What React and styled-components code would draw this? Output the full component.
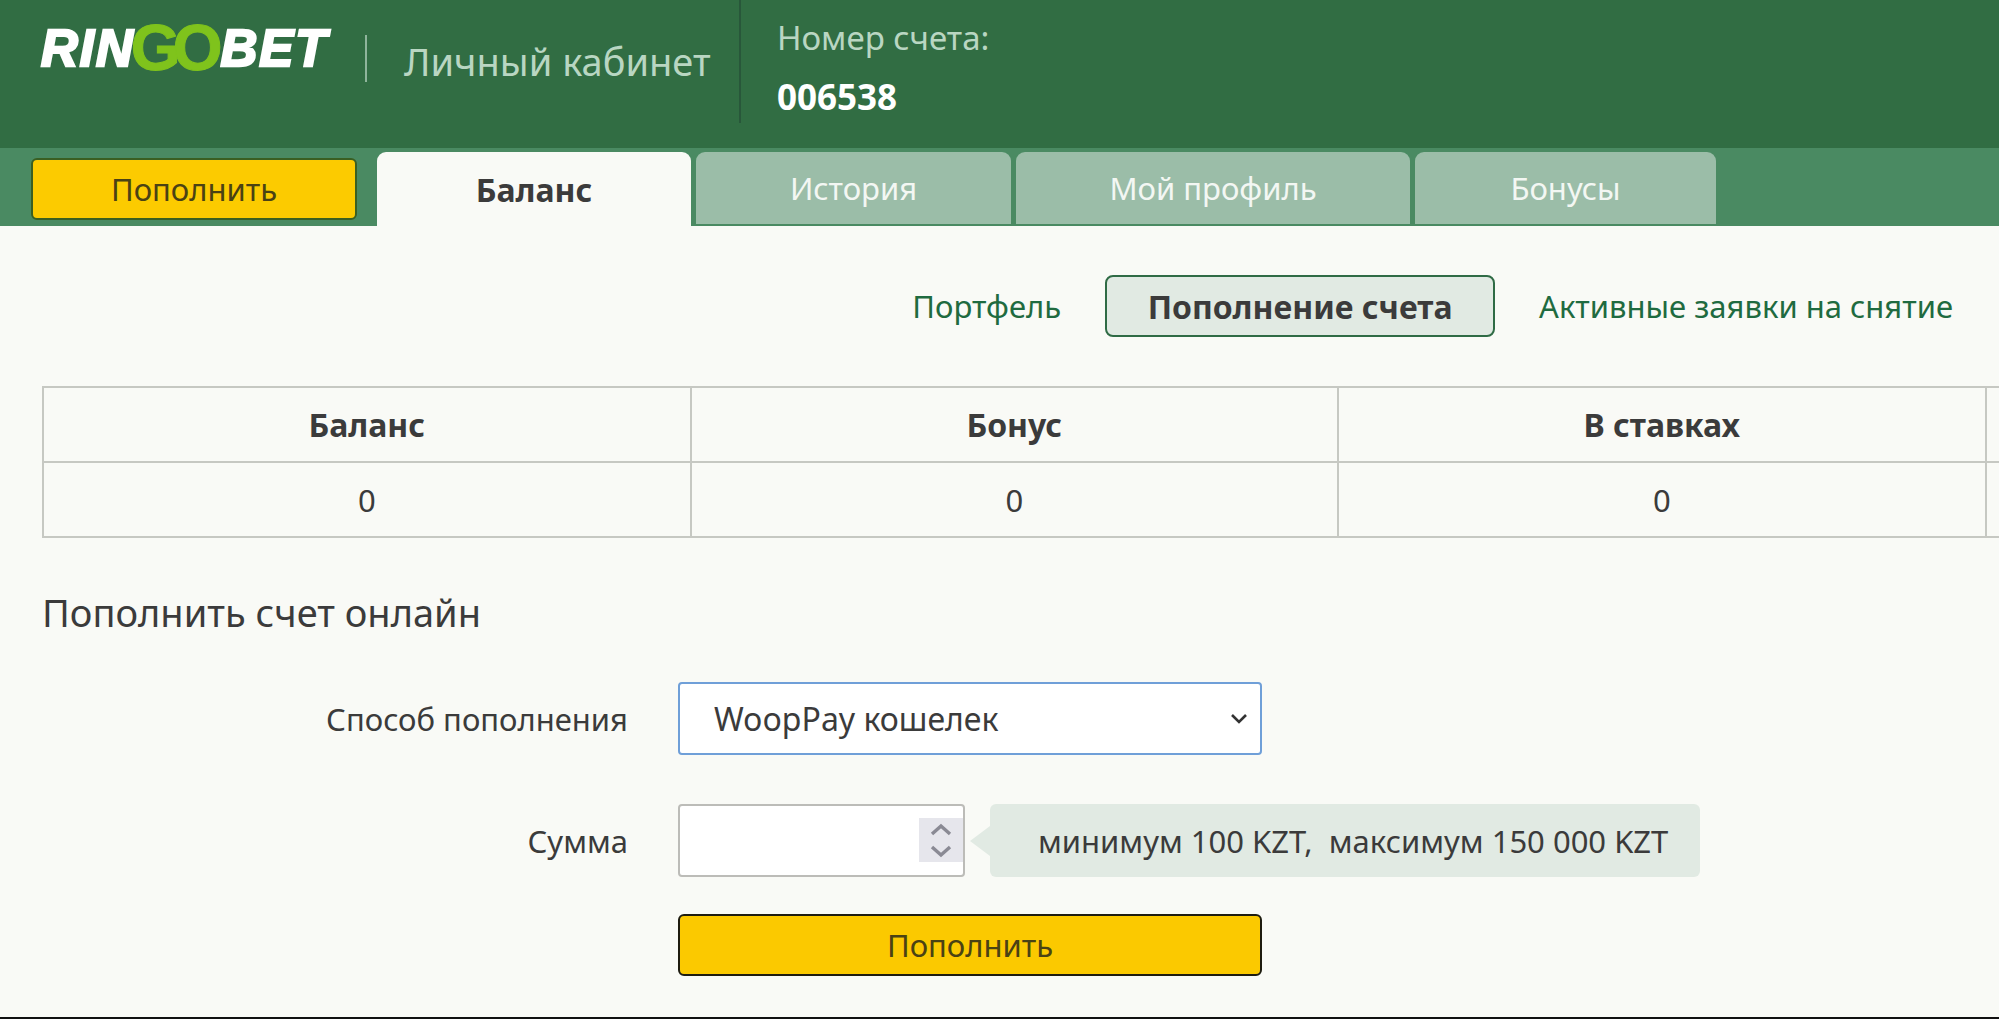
import React from 'react';
import styled, { createGlobalStyle } from 'styled-components';

const GlobalStyle = createGlobalStyle`
  * { box-sizing: border-box; }
  html, body { margin: 0; height: 100%; overflow: hidden; }
  body {
    font-family: 'Noto Sans', 'DejaVu Sans', sans-serif;
    color: #3b3b3b;
    background: #f9faf6;
  }
`;

const Page = styled.div`
  display: flex;
  flex-direction: column;
  height: 100vh;
  overflow: hidden;
`;

const Header = styled.header`
  display: flex;
  align-items: flex-start;
  height: 148px;
  flex: none;
  padding-left: 41px;
  background: #316d43;
`;

const Logo = styled.div`
  display: flex;
  align-items: center;
  width: 288px;
  height: 46px;
  margin-top: 25px;
  font-family: 'Liberation Sans', sans-serif;
  font-weight: 700;
  line-height: 1;
  white-space: nowrap;
  color: #fff;
`;

const LogoWord = styled.span`
  font-size: 51px;
  font-style: italic;
  letter-spacing: 2px;
  -webkit-text-stroke: 2.5px #fff;
`;

const LogoGo = styled.span`
  margin: 0 -2px 0 -4px;
  font-size: 64px;
  letter-spacing: -8px;
  padding-right: 8px;
  color: #7fc31c;
  -webkit-text-stroke: 1px #7fc31c;
`;

const BrandDivider = styled.div`
  width: 2px;
  height: 47px;
  margin: 35px 37px 0 36px;
  background: #8fb59c;
`;

const CabinetTitle = styled.div`
  width: 335px;
  margin-top: 40px;
  font-size: 38px;
  line-height: 42px;
  white-space: nowrap;
  color: #b9d6c2;
`;

const Account = styled.div`
  height: 123px;
  padding-left: 36px;
  border-left: 2px solid #28573a;
`;

const AccountLabel = styled.div`
  margin-top: 20px;
  font-size: 33px;
  line-height: 36px;
  color: #b9d6c2;
`;

const AccountNumber = styled.div`
  margin-top: 22px;
  font-size: 35px;
  font-weight: 700;
  line-height: 38px;
  color: #fff;
`;

const TabBar = styled.nav`
  display: flex;
  align-items: flex-start;
  gap: 5px;
  height: 78px;
  flex: none;
  padding: 4px 0 0 31px;
  background: #4a8a62;
`;

const TopUpButton = styled.button`
  width: 326px;
  height: 62px;
  margin: 6px 15px 0 0;
  border: 2px solid #3a5f22;
  border-radius: 6px;
  background: #fccb00;
  color: #4a4214;
  font: inherit;
  font-size: 31px;
`;

const Tab = styled.div`
  display: flex;
  align-items: center;
  justify-content: center;
  width: ${(p) => p.$width}px;
  height: ${(p) => (p.$active ? 74 : 72)}px;
  border-radius: 9px 9px 0 0;
  background: ${(p) => (p.$active ? '#f9faf6' : '#9bbda8')};
  color: ${(p) => (p.$active ? '#3b3b3b' : '#f3f7f3')};
  font-size: ${(p) => (p.$active ? 32 : 31)}px;
  font-weight: ${(p) => (p.$active ? 700 : 400)};
`;

const Content = styled.main`
  flex: 1;
  min-height: 0;
  padding: 49px 0 0 42px;
  border-bottom: 2px solid #111;
  overflow: hidden;
`;

const SubNav = styled.div`
  display: flex;
  align-items: center;
  justify-content: flex-end;
  gap: 44px;
  height: 62px;
  padding-right: 46px;
  font-size: 31px;
  color: #1f6b40;
`;

const SubNavActive = styled.div`
  display: flex;
  align-items: center;
  justify-content: center;
  width: 390px;
  height: 62px;
  border: 2px solid #2f6b45;
  border-radius: 8px;
  background: #e1eae3;
  color: #3b3b3b;
  font-size: 32px;
  font-weight: 700;
`;

const BalanceTable = styled.table`
  width: 2592px;
  margin-top: 49px;
  border-collapse: collapse;
  table-layout: fixed;
  font-size: 31px;

  th, td {
    height: 75px;
    padding: 0;
    border: 2px solid #c6c8c2;
    text-align: center;
  }

  th {
    font-size: 32px;
  }
`;

const SectionTitle = styled.h2`
  margin: 53px 0 0;
  font-size: 38px;
  font-weight: 400;
  line-height: 42px;
`;

const Form = styled.div`
  display: grid;
  grid-template-columns: 586px 584px auto;
  column-gap: 50px;
  margin-top: 49px;
  font-size: 31px;
`;

const Label = styled.div`
  display: flex;
  align-items: center;
  justify-content: flex-end;
  height: 73px;
  margin-bottom: ${(p) => p.$gap}px;
`;

const SelectWrap = styled.div`
  position: relative;
  height: 73px;
`;

const Select = styled.select`
  width: 100%;
  height: 100%;
  padding: 0 0 0 34px;
  border: 2px solid #6f9fd8;
  border-radius: 4px;
  background: #fff;
  color: #3b3b3b;
  font: inherit;
  font-size: 32px;
  appearance: none;
  outline: none;
`;

const Chevron = styled.svg`
  position: absolute;
  top: 30px;
  right: 13px;
  width: 20px;
  height: 14px;
  pointer-events: none;
`;

const AmountRow = styled.div`
  display: flex;
  grid-column: 2 / 4;
  gap: 25px;
  height: 73px;
`;

const AmountWrap = styled.div`
  position: relative;
  width: 287px;
  height: 73px;
`;

const AmountInput = styled.input`
  width: 100%;
  height: 100%;
  border: 2px solid #bcbcb8;
  border-radius: 4px;
  background: #fff;
  font: inherit;
  outline: none;
`;

const Spinner = styled.svg`
  position: absolute;
  top: 14px;
  right: 2px;
  width: 44px;
  height: 44px;
  background: #e6e6ec;
`;

const Hint = styled.div`
  position: relative;
  display: flex;
  align-items: center;
  width: 710px;
  height: 73px;
  padding-left: 48px;
  border-radius: 6px;
  background: #e1eae3;
  white-space: pre;

  &::before {
    content: '';
    position: absolute;
    top: 22px;
    left: -20px;
    border-style: solid;
    border-width: 15px 20px 15px 0;
    border-color: transparent #e1eae3 transparent transparent;
  }
`;

const SubmitButton = styled.button`
  grid-column: 2;
  height: 62px;
  margin-top: 37px;
  border: 2px solid #1e1c10;
  border-radius: 6px;
  background: #fbc900;
  color: #4a4214;
  font: inherit;
`;

const App = () => {
  return (
    <Page>
      <GlobalStyle />
      <Header>
        <Logo>
          <LogoWord>RIN</LogoWord>
          <LogoGo>GO</LogoGo>
          <LogoWord>BET</LogoWord>
        </Logo>
        <BrandDivider />
        <CabinetTitle>Личный кабинет</CabinetTitle>
        <Account>
          <AccountLabel>Номер счета:</AccountLabel>
          <AccountNumber>006538</AccountNumber>
        </Account>
      </Header>
      <TabBar>
        <TopUpButton>Пополнить</TopUpButton>
        <Tab $active $width={314}>Баланс</Tab>
        <Tab $width={315}>История</Tab>
        <Tab $width={394}>Мой профиль</Tab>
        <Tab $width={301}>Бонусы</Tab>
      </TabBar>
      <Content>
        <SubNav>
          <span>Портфель</span>
          <SubNavActive>Пополнение счета</SubNavActive>
          <span>Активные заявки на снятие</span>
        </SubNav>
        <BalanceTable>
          <thead>
            <tr>
              <th>Баланс</th>
              <th>Бонус</th>
              <th>В ставках</th>
              <th />
            </tr>
          </thead>
          <tbody>
            <tr>
              <td>0</td>
              <td>0</td>
              <td>0</td>
              <td />
            </tr>
          </tbody>
        </BalanceTable>
        <SectionTitle>Пополнить счет онлайн</SectionTitle>
        <Form>
          <Label $gap={49}>Способ пополнения</Label>
          <SelectWrap>
            <Select defaultValue="woop">
              <option value="woop">WoopPay кошелек</option>
            </Select>
            <Chevron viewBox="0 0 20 14" fill="none" stroke="#333" strokeWidth="2.6">
              <path d="M3 3l7 7 7-7" />
            </Chevron>
          </SelectWrap>
          <div />
          <Label $gap={0}>Сумма</Label>
          <AmountRow>
            <AmountWrap>
              <AmountInput type="text" />
              <Spinner viewBox="0 0 44 44" fill="none" stroke="#8a8a94" strokeWidth="3.4">
                <path d="M13 16l9-8 9 8M13 29l9 8 9-8" />
              </Spinner>
            </AmountWrap>
            <Hint>минимум 100 KZT,  максимум 150 000 KZT</Hint>
          </AmountRow>
          <SubmitButton>Пополнить</SubmitButton>
        </Form>
      </Content>
    </Page>
  );
};

export default App;
